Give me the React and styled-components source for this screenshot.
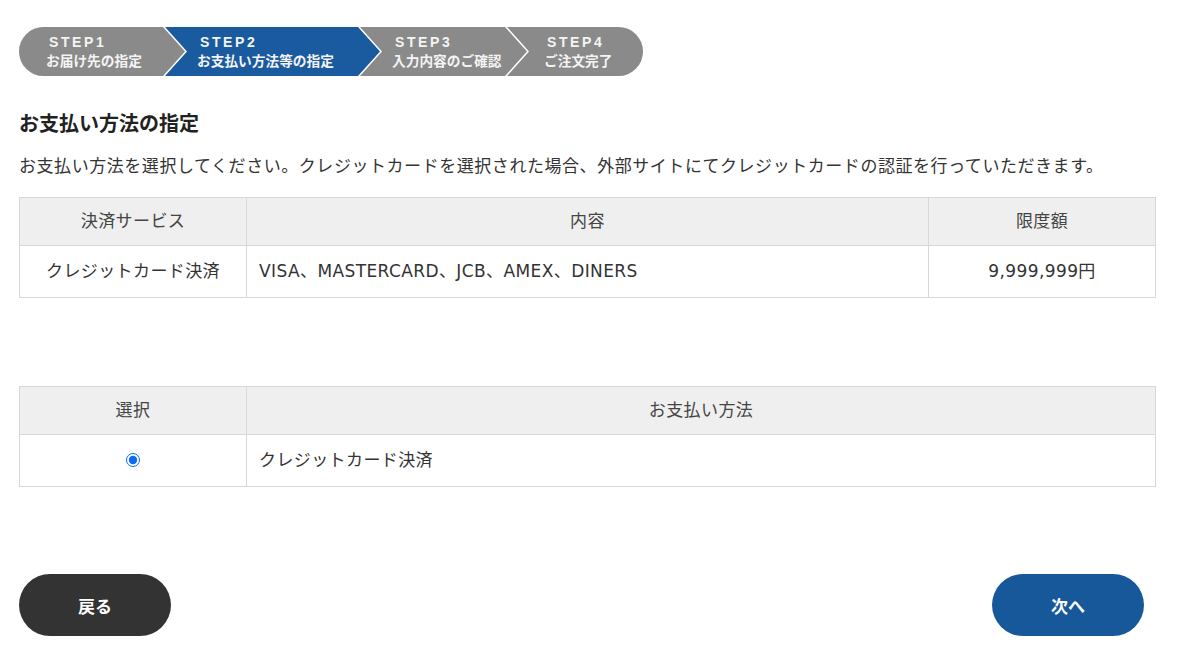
import styled, { createGlobalStyle } from "styled-components";

const GlobalStyle = createGlobalStyle`
  body {
    margin: 0;
    background: #fff;
    font-family: "DejaVu Sans", "Noto Sans CJK JP", sans-serif;
    color: #333;
  }
`;

const steps = [
  { label: "STEP1", title: "お届け先の指定", width: 144, pad: 27 },
  { label: "STEP2", title: "お支払い方法等の指定", width: 195, pad: 34, active: true },
  { label: "STEP3", title: "入力内容のご確認", width: 147, pad: 34 },
  { label: "STEP4", title: "ご注文完了", width: 138, pad: 39, last: true },
];

const ARROW = 22;

const Page = styled.div`
  padding: 27px 28px 30px 19px;
  width: 1136px;
`;

const StepBar = styled.div`
  display: flex;
  width: 624px;
  height: 49px;
  border-radius: 25px;
  overflow: hidden;
  background: #fff;
`;

const clipFor = ({ $first, $last, $w }) => {
  const end = $last ? "100% 0, 100% 100%" : `${$w}px 0, ${$w + ARROW}px 50%, ${$w}px 100%`;
  if ($first) return `polygon(0 0, ${end}, 0 100%)`;
  return `polygon(2px 0, ${end}, 2px 100%, ${ARROW + 2}px 50%)`;
};

const Step = styled.div`
  flex-shrink: 0;
  box-sizing: border-box;
  width: ${(p) => (p.$last ? p.$w : p.$w + ARROW)}px;
  height: 100%;
  margin-left: ${(p) => (p.$first ? 0 : -ARROW)}px;
  background: ${(p) => (p.$active ? "#1a5a9f" : "#8a8a8a")};
  clip-path: ${clipFor};
  display: flex;
  flex-direction: column;
  justify-content: center;
  padding-left: ${(p) => p.$pad}px;
  color: #f4f4f4;
`;

const StepLabel = styled.span`
  font-family: "Liberation Sans", "Noto Sans", sans-serif;
  font-weight: 700;
  font-size: 14px;
  letter-spacing: 2.6px;
  line-height: 17px;
  padding-left: 3px;
`;

const StepTitle = styled.span`
  font-family: "Noto Sans CJK JP", sans-serif;
  font-weight: 700;
  font-size: 13.7px;
  line-height: 19px;
  white-space: nowrap;
`;

const Heading = styled.h2`
  margin: 34px 0 0;
  font-family: "Noto Sans CJK JP", sans-serif;
  font-size: 20px;
  font-weight: 700;
  line-height: 26px;
  color: #222;
`;

const Lead = styled.p`
  margin: 17px 0 0;
  font-size: 17px;
  letter-spacing: 0.55px;
  line-height: 26px;
  white-space: nowrap;
`;

const Table = styled.table`
  width: 1137px;
  border-collapse: collapse;
  margin-top: ${(p) => p.$top}px;
  font-size: 17px;
  letter-spacing: 0.4px;
  table-layout: fixed;
`;

const Th = styled.th`
  height: 48px;
  padding: 0 12px 5px;
  background: #efefef;
  border: 1px solid #d8d8d8;
  font-weight: 400;
  color: #444;
  text-align: center;
  box-sizing: border-box;
`;

const Td = styled.td`
  height: 52px;
  padding: 0 12px 4px;
  border: 1px solid #d8d8d8;
  text-align: ${(p) => p.$align || "left"};
  color: #333;
  box-sizing: border-box;
`;

const Radio = styled.input`
  margin: 0;
  width: 14px;
  height: 14px;
  accent-color: #0a6cf5;
  vertical-align: middle;
`;

const Actions = styled.div`
  display: flex;
  justify-content: space-between;
  margin-top: 87px;
  padding-right: 12px;
  width: 1125px;
`;

const Button = styled.button`
  width: 152px;
  height: 62px;
  border: none;
  border-radius: 31px;
  background: ${(p) => (p.$primary ? "#17589b" : "#333")};
  color: #fff;
  font-family: "Noto Sans CJK JP", sans-serif;
  font-size: 17px;
  font-weight: 700;
  cursor: pointer;
`;

export default function App() {
  return (
    <>
      <GlobalStyle />
      <Page>
        <StepBar>
          {steps.map((s, i) => (
            <Step
              key={s.label}
              $w={s.width}
              $pad={s.pad}
              $first={i === 0}
              $last={s.last}
              $active={s.active}
            >
              <StepLabel>{s.label}</StepLabel>
              <StepTitle>{s.title}</StepTitle>
            </Step>
          ))}
        </StepBar>

        <Heading>お支払い方法の指定</Heading>
        <Lead>
          お支払い方法を選択してください。クレジットカードを選択された場合、外部サイトにてクレジットカードの認証を行っていただきます。
        </Lead>

        <Table $top={18}>
          <colgroup>
            <col style={{ width: 227 }} />
            <col style={{ width: 682 }} />
            <col style={{ width: 227 }} />
          </colgroup>
          <thead>
            <tr>
              <Th>決済サービス</Th>
              <Th>内容</Th>
              <Th>限度額</Th>
            </tr>
          </thead>
          <tbody>
            <tr>
              <Td $align="center">クレジットカード決済</Td>
              <Td>VISA、MASTERCARD、JCB、AMEX、DINERS</Td>
              <Td $align="center">9,999,999円</Td>
            </tr>
          </tbody>
        </Table>

        <Table $top={88}>
          <colgroup>
            <col style={{ width: 227 }} />
            <col style={{ width: 909 }} />
          </colgroup>
          <thead>
            <tr>
              <Th>選択</Th>
              <Th>お支払い方法</Th>
            </tr>
          </thead>
          <tbody>
            <tr>
              <Td $align="center">
                <Radio type="radio" name="pay" defaultChecked />
              </Td>
              <Td>クレジットカード決済</Td>
            </tr>
          </tbody>
        </Table>

        <Actions>
          <Button>戻る</Button>
          <Button $primary>次へ</Button>
        </Actions>
      </Page>
    </>
  );
}
